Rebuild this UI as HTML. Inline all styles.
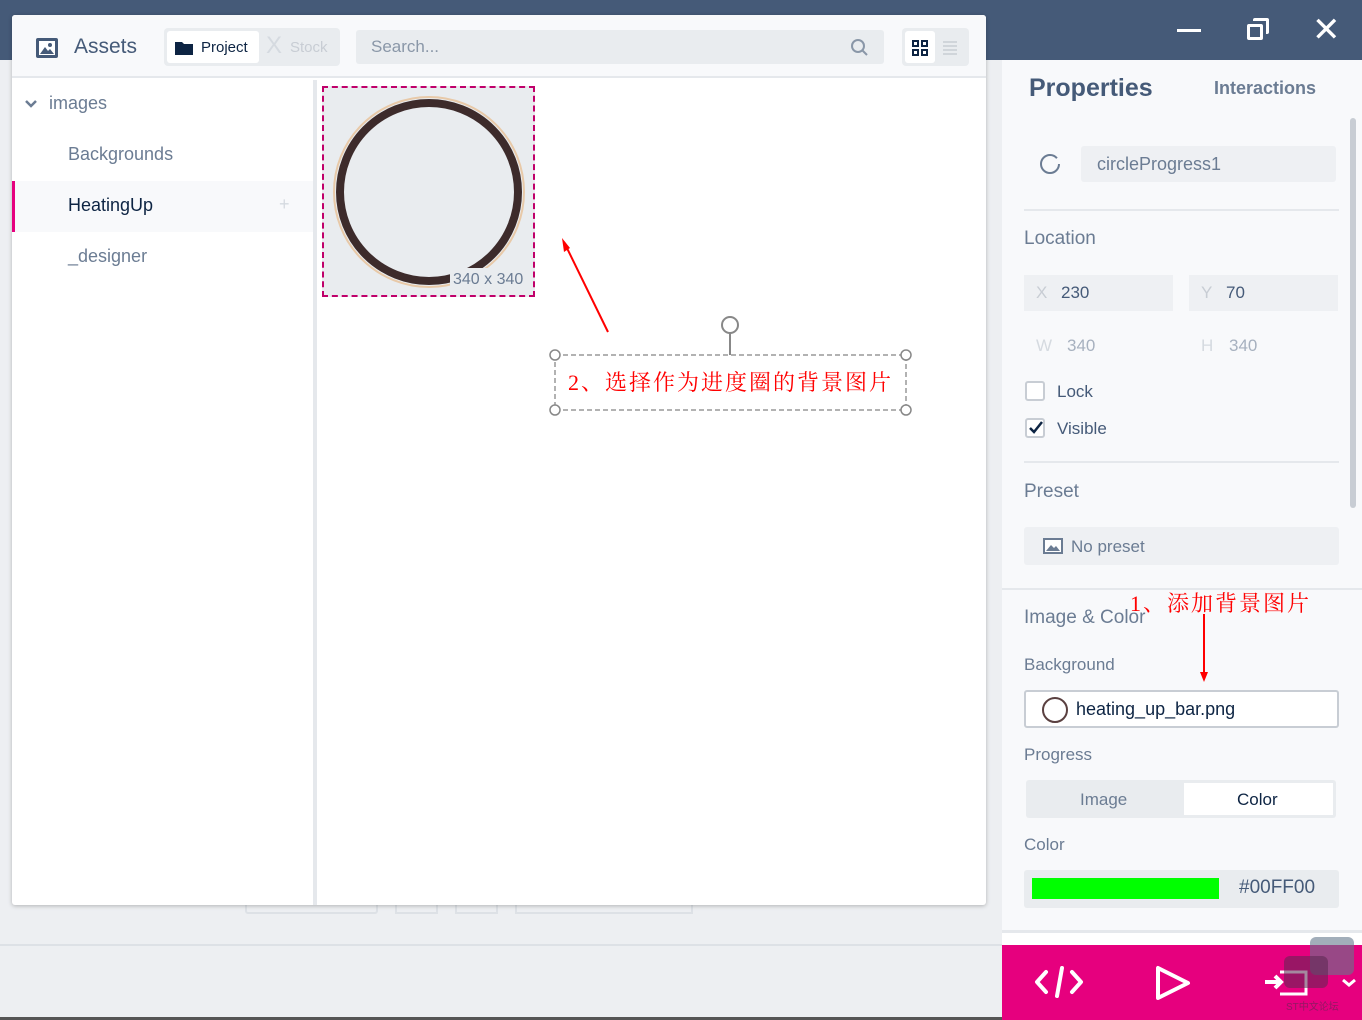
<!DOCTYPE html>
<html><head><meta charset="utf-8"><style>
*{box-sizing:border-box;margin:0;padding:0}
body{width:1362px;height:1020px;overflow:hidden;background:#edeff2;font-family:"Liberation Sans","Noto Sans CJK SC",sans-serif;position:relative;color:#455a78}
.a{position:absolute}
.top{left:0;top:0;width:1362px;height:60px;background:#455a78}
.cn{font-family:"Liberation Serif","Noto Serif CJK SC",serif;color:#f00}
</style></head><body>
<div class="a top"></div>
<div class="a" style="left:1177px;top:29px;width:24px;height:3px;background:#fff"></div>
<div class="a" style="left:1247px;top:24px;width:16px;height:16px;border:3px solid #fff;border-radius:2px"></div>
<div class="a" style="left:1253px;top:18px;width:16px;height:16px;border-top:3px solid #fff;border-right:3px solid #fff;border-radius:2px"></div>
<div class="a" style="left:1312px;top:16px;font-size:34px;color:#fff;line-height:28px">✕</div>

<div class="a" style="left:0;top:944px;width:1002px;height:2px;background:#dde1e6"></div>
<div class="a" style="left:0;top:1017px;width:1002px;height:3px;background:#555"></div>
<div class="a" style="left:245px;top:900px;width:133px;height:14px;border:2px solid #dde1e6;border-top:none;border-radius:0 0 3px 3px"></div>
<div class="a" style="left:395px;top:900px;width:43px;height:14px;border:2px solid #dde1e6;border-top:none"></div>
<div class="a" style="left:455px;top:900px;width:43px;height:14px;border:2px solid #dde1e6;border-top:none"></div>
<div class="a" style="left:515px;top:900px;width:178px;height:14px;border:2px solid #dde1e6;border-top:none"></div>

<div class="a" style="left:12px;top:15px;width:974px;height:890px;background:#fff;box-shadow:0 1px 4px rgba(0,0,0,.25);border-radius:3px">
 <div class="a" style="left:0;top:0;width:974px;height:63px;background:#f8f9fb;border-bottom:2px solid #e5e8ec;border-radius:3px 3px 0 0"></div>
 <svg class="a" style="left:23px;top:22px" width="24" height="22"><rect x="1" y="1" width="22" height="20" rx="2" fill="#455a78"/><rect x="4" y="4" width="16" height="14" fill="#fff"/><path d="M5 17l5-7 3 4 2-2 4 5z" fill="#455a78"/><circle cx="15" cy="8" r="2" fill="#455a78"/></svg>
 <div class="a" style="left:62px;top:20px;font-size:21px">Assets</div>
 <div class="a" style="left:152px;top:13px;width:176px;height:38px;background:#e9ecef;border-radius:4px"></div>
 <div class="a" style="left:155px;top:16px;width:92px;height:32px;background:#fff;border-radius:3px"></div>
 <svg class="a" style="left:162px;top:24px" width="20" height="17"><path d="M1 3h7l2 2h9v11H1z" fill="#0d2443"/></svg>
 <div class="a" style="left:189px;top:24px;font-size:15px;color:#0d2443">Project</div>
 <div class="a" style="left:254px;top:18px;font-size:24px;color:#d5dae0;line-height:26px">X</div>
 <div class="a" style="left:278px;top:24px;font-size:15px;color:#c8cdd4">Stock</div>
 <div class="a" style="left:344px;top:15px;width:528px;height:34px;background:#e9ecef;border-radius:3px"></div>
 <div class="a" style="left:359px;top:22px;font-size:17px;color:#8a97a8">Search...</div>
 <svg class="a" style="left:838px;top:23px" width="20" height="20"><circle cx="8" cy="8" r="6" fill="none" stroke="#8a97a8" stroke-width="2"/><path d="M12 12l5 5" stroke="#8a97a8" stroke-width="2"/></svg>
 <div class="a" style="left:890px;top:13px;width:67px;height:38px;background:#e9ecef;border-radius:4px"></div>
 <div class="a" style="left:893px;top:16px;width:30px;height:32px;background:#fff;border-radius:3px"></div>
 <svg class="a" style="left:900px;top:25px" width="16" height="16"><g fill="none" stroke="#0d2443" stroke-width="2"><rect x="1" y="1" width="5" height="5"/><rect x="10" y="1" width="5" height="5"/><rect x="1" y="10" width="5" height="5"/><rect x="10" y="10" width="5" height="5"/></g></svg>
 <svg class="a" style="left:930px;top:25px" width="16" height="16"><g stroke="#c8cdd4" stroke-width="1.5"><path d="M1 2h14M1 6h14M1 10h14M1 14h14"/></g></svg>
 <div class="a" style="left:301px;top:65px;width:4px;height:825px;background:#e5e8ec"></div>
 <svg class="a" style="left:12px;top:84px" width="14" height="10"><path d="M2 2l5 5 5-5" fill="none" stroke="#6b7c93" stroke-width="2.5"/></svg>
 <div class="a" style="left:37px;top:78px;font-size:18px;color:#6b7c93">images</div>
 <div class="a" style="left:56px;top:129px;font-size:18px;color:#6b7c93">Backgrounds</div>
 <div class="a" style="left:0;top:166px;width:301px;height:51px;background:#f8f9fb;border-left:3px solid #e6007e"></div>
 <div class="a" style="left:56px;top:180px;font-size:18px;color:#0d2443">HeatingUp</div>
 <div class="a" style="left:267px;top:179px;font-size:18px;color:#d5dae0">+</div>
 <div class="a" style="left:56px;top:231px;font-size:18px;color:#6b7c93">_designer</div>
 <div class="a" style="left:310px;top:71px;width:213px;height:211px;border:2px dashed #c0006a;background:#e9ecef"></div>
 <svg class="a" style="left:320px;top:80px" width="194" height="194"><circle cx="97" cy="97" r="95" fill="none" stroke="#e8c9a8" stroke-width="2"/><circle cx="97" cy="97" r="89" fill="none" stroke="#3d2b2b" stroke-width="8"/></svg>
 <div class="a" style="left:438px;top:253px;width:82px;height:24px;background:#e9ecef"></div>
 <div class="a" style="left:441px;top:256px;font-size:16px;color:#6b7c93">340 x 340</div>
</div>

<svg class="a" style="left:540px;top:230px" width="380" height="190"><path d="M68 102L24 12" stroke="#f00" stroke-width="2"/><path d="M22 8l2 14 6-4z" fill="#f00"/>
<circle cx="190" cy="95" r="8" fill="#fff" stroke="#888" stroke-width="2"/><path d="M190 103v22" stroke="#888" stroke-width="2"/>
<rect x="15" y="125" width="351" height="55" fill="none" stroke="#999" stroke-width="1.5" stroke-dasharray="5,3"/>
<g fill="#fff" stroke="#888" stroke-width="1.5"><circle cx="15" cy="125" r="5"/><circle cx="366" cy="125" r="5"/><circle cx="15" cy="180" r="5"/><circle cx="366" cy="180" r="5"/></g></svg>
<div class="a cn" style="left:568px;top:366px;font-size:22px;letter-spacing:2px">2、选择作为进度圈的背景图片</div>

<div class="a" style="left:1002px;top:60px;width:360px;height:885px;background:#f8f9fb"></div>
<div class="a" style="left:1002px;top:930px;width:360px;height:16px;background:#fff;border-top:3px solid #e5e8ec"></div>
<div class="a" style="left:1350px;top:118px;width:6px;height:390px;background:#c8cdd4;border-radius:3px"></div>
<div class="a" style="left:1029px;top:74px;font-size:25px;font-weight:bold;color:#455a78">Properties</div>
<div class="a" style="left:1214px;top:78px;font-size:18px;font-weight:bold;color:#6b7c93">Interactions</div>
<svg class="a" style="left:1038px;top:152px" width="24" height="24"><circle cx="12" cy="12" r="9" fill="none" stroke="#6b7c93" stroke-width="2" stroke-dasharray="50 7"/></svg>
<div class="a" style="left:1081px;top:146px;width:255px;height:36px;background:#eef0f3;border-radius:3px"></div>
<div class="a" style="left:1097px;top:154px;font-size:18px;color:#6b7c93">circleProgress1</div>
<div class="a" style="left:1024px;top:209px;width:315px;height:2px;background:#e5e8ec"></div>
<div class="a" style="left:1024px;top:228px;font-size:19px;color:#6b7c93">Location</div>
<div class="a" style="left:1024px;top:275px;width:149px;height:36px;background:#eef0f3"></div>
<div class="a" style="left:1189px;top:275px;width:149px;height:36px;background:#eef0f3"></div>
<div class="a" style="left:1036px;top:283px;font-size:17px;color:#c8cdd4">X</div>
<div class="a" style="left:1061px;top:283px;font-size:17px;color:#455a78">230</div>
<div class="a" style="left:1201px;top:283px;font-size:17px;color:#c8cdd4">Y</div>
<div class="a" style="left:1226px;top:283px;font-size:17px;color:#455a78">70</div>
<div class="a" style="left:1036px;top:336px;font-size:17px;color:#d5dae0">W</div>
<div class="a" style="left:1067px;top:336px;font-size:17px;color:#a7b1bf">340</div>
<div class="a" style="left:1201px;top:336px;font-size:17px;color:#d5dae0">H</div>
<div class="a" style="left:1229px;top:336px;font-size:17px;color:#a7b1bf">340</div>
<div class="a" style="left:1025px;top:381px;width:20px;height:20px;border:2px solid #c8cdd4;border-radius:3px;background:#fff"></div>
<div class="a" style="left:1057px;top:382px;font-size:17px;color:#455a78">Lock</div>
<div class="a" style="left:1025px;top:418px;width:20px;height:20px;border:2px solid #c8cdd4;border-radius:3px;background:#fff"></div>
<svg class="a" style="left:1027px;top:419px" width="18" height="18"><path d="M3 9l4 4 8-10" fill="none" stroke="#0d2443" stroke-width="2.5"/></svg>
<div class="a" style="left:1057px;top:419px;font-size:17px;color:#455a78">Visible</div>
<div class="a" style="left:1024px;top:461px;width:315px;height:2px;background:#e5e8ec"></div>
<div class="a" style="left:1024px;top:481px;font-size:19px;color:#6b7c93">Preset</div>
<div class="a" style="left:1024px;top:527px;width:315px;height:38px;background:#eef0f3;border-radius:3px"></div>
<svg class="a" style="left:1042px;top:537px" width="22" height="18"><rect x="1" y="1" width="20" height="16" fill="#6b7c93"/><rect x="3" y="3" width="16" height="12" fill="#fff"/><path d="M4 14l5-6 3 3 2-2 4 5z" fill="#6b7c93"/></svg>
<div class="a" style="left:1071px;top:537px;font-size:17px;color:#6b7c93">No preset</div>
<div class="a" style="left:1002px;top:588px;width:360px;height:2px;background:#e5e8ec"></div>
<div class="a" style="left:1024px;top:607px;font-size:19px;color:#6b7c93">Image &amp; Color</div>
<div class="a cn" style="left:1130px;top:587px;font-size:22px;letter-spacing:2px">1、添加背景图片</div>
<svg class="a" style="left:1195px;top:612px" width="20" height="72"><path d="M9 2v60" stroke="#f00" stroke-width="2"/><path d="M5 60l4 10 4-10z" fill="#f00"/></svg>
<div class="a" style="left:1024px;top:655px;font-size:17px;color:#6b7c93">Background</div>
<div class="a" style="left:1024px;top:690px;width:315px;height:38px;background:#fff;border:2px solid #c8cdd4;border-radius:3px"></div>
<div class="a" style="left:1042px;top:697px;width:26px;height:26px;border:2px solid #5a4040;border-radius:50%"></div>
<div class="a" style="left:1076px;top:699px;font-size:18px;color:#0d2443">heating_up_bar.png</div>
<div class="a" style="left:1024px;top:745px;font-size:17px;color:#6b7c93">Progress</div>
<div class="a" style="left:1026px;top:780px;width:310px;height:38px;background:#e9ecef;border-radius:3px"></div>
<div class="a" style="left:1184px;top:783px;width:149px;height:32px;background:#fff"></div>
<div class="a" style="left:1080px;top:790px;font-size:17px;color:#6b7c93">Image</div>
<div class="a" style="left:1237px;top:790px;font-size:17px;color:#0d2443">Color</div>
<div class="a" style="left:1024px;top:835px;font-size:17px;color:#6b7c93">Color</div>
<div class="a" style="left:1024px;top:870px;width:315px;height:38px;background:#e9ecef;border-radius:3px"></div>
<div class="a" style="left:1032px;top:878px;width:187px;height:21px;background:#00ff00"></div>
<div class="a" style="left:1239px;top:877px;font-size:19px;color:#455a78">#00FF00</div>

<div class="a" style="left:1002px;top:945px;width:360px;height:75px;background:#e6007e"></div>
<svg class="a" style="left:1032px;top:962px" width="54" height="40"><g fill="none" stroke="#fff" stroke-width="4" stroke-linecap="round" stroke-linejoin="round"><path d="M14 10L5 20l9 10M40 10l9 10-9 10M30 6l-5 28"/></g></svg>
<svg class="a" style="left:1152px;top:964px" width="40" height="40"><path d="M6 4v30l30-15z" fill="none" stroke="#fff" stroke-width="4" stroke-linejoin="round"/></svg>
<svg class="a" style="left:1262px;top:968px" width="50" height="32"><path d="M3 14h16M13 8l6 6-6 6" fill="none" stroke="#fff" stroke-width="4"/><path d="M18 4h26v22H18" fill="none" stroke="#fff" stroke-width="3"/></svg>
<svg class="a" style="left:1341px;top:977px" width="16" height="12"><path d="M2 3l6 5 6-5" fill="none" stroke="#fff" stroke-width="3"/></svg>
<div class="a" style="left:1310px;top:937px;width:44px;height:38px;background:rgba(100,120,140,.6);border-radius:6px"></div>
<div class="a" style="left:1284px;top:956px;width:44px;height:32px;background:rgba(90,40,80,.55);border-radius:6px"></div>
<div class="a" style="left:1286px;top:998px;font-size:10px;color:rgba(90,40,80,.6)">ST中文论坛</div>
</body></html>
